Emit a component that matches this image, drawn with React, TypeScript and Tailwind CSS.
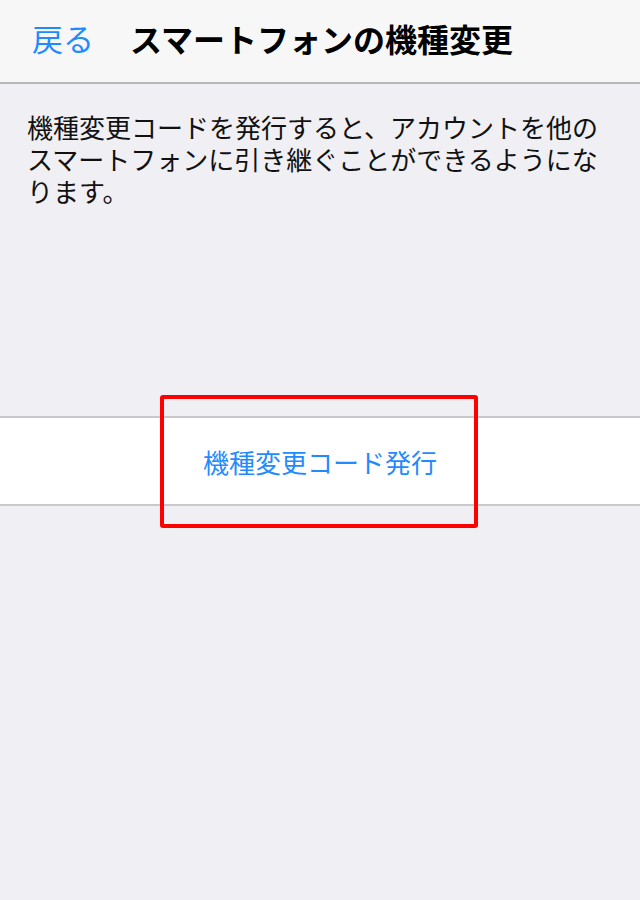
export default function App() {
  return (
    <div
      className="relative flex min-h-[900px] w-[640px] flex-col bg-[#efeff4]"
      style={{ fontFamily: '"Noto Sans CJK JP", "Noto Sans", sans-serif' }}
    >
      {/* ナビゲーションバー */}
      <header className="flex h-[84px] items-center border-b-2 border-[#b8b8bc] bg-[#f7f7f8] pb-[7px] pl-[32px]">
        <span className="text-[31px] leading-none text-[#1f8bff]">戻る</span>
        <h1 className="ml-[36px] text-[32px] font-bold leading-none text-black">
          スマートフォンの機種変更
        </h1>
      </header>

      <p className="px-[27px] pt-[27px] text-[26px] leading-[32px] text-[#111]">
        機種変更コードを発行すると、アカウントを他のスマートフォンに引き継ぐことができるようになります。
      </p>

      <div className="mt-[209px] flex h-[90px] items-center justify-center border-y-2 border-[#c8c7cc] bg-white">
        <span className="text-[26px] text-[#1f8bff]">機種変更コード発行</span>
      </div>

      {/* 注目枠 */}
      <div className="absolute left-[160px] top-[395px] h-[133px] w-[318px] rounded-[3px] border-[4px] border-[#ff0000]" />
    </div>
  );
}
